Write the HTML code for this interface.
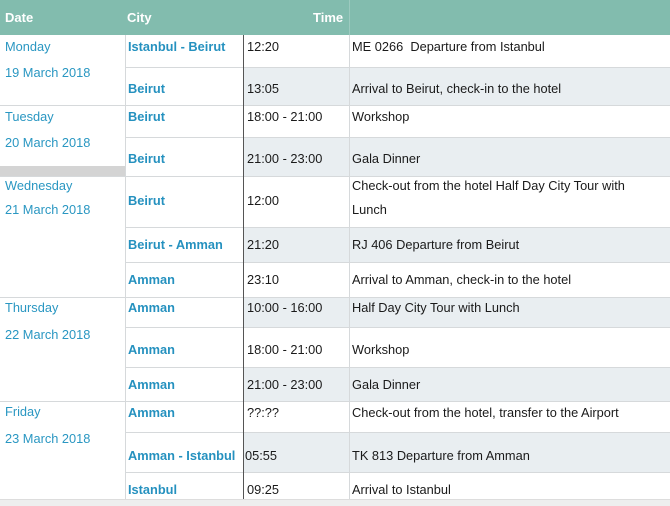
<!DOCTYPE html>
<html><head><meta charset="utf-8"><style>
*{margin:0;padding:0;box-sizing:border-box}
body{width:670px;height:506px;overflow:hidden;background:#fff;font-family:"Liberation Sans",Arial,sans-serif;font-size:12.8px;color:#1a1a1a;position:relative}
.h{position:absolute;left:0;top:0;width:670px;height:35px;background:#82bcae}
.ht{position:absolute;top:10px;color:#fff;font-weight:bold;font-size:13px}
.sh{position:absolute;left:243px;width:427px;background:#e9eef1}
.hl{position:absolute;height:1px;background:#d6d9db}
.vl{position:absolute;width:1px;background:#d6d9db}
.t{position:absolute;white-space:nowrap;line-height:16px;margin-top:1px}
.d{color:#2a97c2}
.c{color:#2591bf;font-weight:bold}
</style></head><body>
<div class="h"></div>
<div class="ht" style="left:5px">Date</div>
<div class="ht" style="left:127px">City</div>
<div class="ht" style="left:313px">Time</div>
<div class="vl" style="left:349px;top:0;height:35px;background:#9ccabf"></div>

<div class="sh" style="top:67px;height:38px"></div>
<div class="sh" style="top:137px;height:39px"></div>
<div class="sh" style="top:227px;height:35px"></div>
<div class="sh" style="top:297px;height:30px"></div>
<div class="sh" style="top:367px;height:35px"></div>
<div class="sh" style="top:432px;height:40px"></div>
<div style="position:absolute;left:0;top:166px;width:125px;height:10px;background:#d4d4d4"></div>

<div class="hl" style="left:125px;width:545px;top:67px"></div>
<div class="hl" style="left:0;width:670px;top:105px"></div>
<div class="hl" style="left:125px;width:545px;top:137px"></div>
<div class="hl" style="left:0;width:670px;top:176px"></div>
<div class="hl" style="left:125px;width:545px;top:227px"></div>
<div class="hl" style="left:125px;width:545px;top:262px"></div>
<div class="hl" style="left:0;width:670px;top:297px"></div>
<div class="hl" style="left:125px;width:545px;top:327px"></div>
<div class="hl" style="left:125px;width:545px;top:367px"></div>
<div class="hl" style="left:0;width:670px;top:401px"></div>
<div class="hl" style="left:125px;width:545px;top:432px"></div>
<div class="hl" style="left:125px;width:545px;top:472px"></div>
<div class="vl" style="left:125px;top:35px;height:465px"></div>
<div class="vl" style="left:349px;top:35px;height:465px"></div>
<div class="vl" style="left:243px;top:35px;height:465px;background:#555"></div>
<div style="position:absolute;left:0;top:499px;width:670px;height:7px;background:#eeeeee;border-top:1px solid #ddd"></div>

<div class="t d" style="left:5px;top:38px">Monday</div>
<div class="t d" style="left:5px;top:64px">19 March 2018</div>
<div class="t d" style="left:5px;top:108px">Tuesday</div>
<div class="t d" style="left:5px;top:134px">20 March 2018</div>
<div class="t d" style="left:5px;top:177px">Wednesday</div>
<div class="t d" style="left:5px;top:201px">21 March 2018</div>
<div class="t d" style="left:5px;top:299px">Thursday</div>
<div class="t d" style="left:5px;top:326px">22 March 2018</div>
<div class="t d" style="left:5px;top:403px">Friday</div>
<div class="t d" style="left:5px;top:430px">23 March 2018</div>

<div class="t c" style="left:128px;top:38px">Istanbul - Beirut</div>
<div class="t" style="left:247px;top:38px">12:20</div>
<div class="t" style="left:352px;top:38px">ME 0266&nbsp; Departure from Istanbul</div>

<div class="t c" style="left:128px;top:80px">Beirut</div>
<div class="t" style="left:247px;top:80px">13:05</div>
<div class="t" style="left:352px;top:80px">Arrival to Beirut, check-in to the hotel</div>

<div class="t c" style="left:128px;top:108px">Beirut</div>
<div class="t" style="left:247px;top:108px">18:00 - 21:00</div>
<div class="t" style="left:352px;top:108px">Workshop</div>

<div class="t c" style="left:128px;top:150px">Beirut</div>
<div class="t" style="left:247px;top:150px">21:00 - 23:00</div>
<div class="t" style="left:352px;top:150px">Gala Dinner</div>

<div class="t c" style="left:128px;top:192px">Beirut</div>
<div class="t" style="left:247px;top:192px">12:00</div>
<div class="t" style="left:352px;top:177px">Check-out from the hotel Half Day City Tour with</div>
<div class="t" style="left:352px;top:201px">Lunch</div>

<div class="t c" style="left:128px;top:236px">Beirut - Amman</div>
<div class="t" style="left:247px;top:236px">21:20</div>
<div class="t" style="left:352px;top:236px">RJ 406 Departure from Beirut</div>

<div class="t c" style="left:128px;top:271px">Amman</div>
<div class="t" style="left:247px;top:271px">23:10</div>
<div class="t" style="left:352px;top:271px">Arrival to Amman, check-in to the hotel</div>

<div class="t c" style="left:128px;top:299px">Amman</div>
<div class="t" style="left:247px;top:299px">10:00 - 16:00</div>
<div class="t" style="left:352px;top:299px">Half Day City Tour with Lunch</div>

<div class="t c" style="left:128px;top:341px">Amman</div>
<div class="t" style="left:247px;top:341px">18:00 - 21:00</div>
<div class="t" style="left:352px;top:341px">Workshop</div>

<div class="t c" style="left:128px;top:376px">Amman</div>
<div class="t" style="left:247px;top:376px">21:00 - 23:00</div>
<div class="t" style="left:352px;top:376px">Gala Dinner</div>

<div class="t c" style="left:128px;top:404px">Amman</div>
<div class="t" style="left:247px;top:404px">??:??</div>
<div class="t" style="left:352px;top:404px">Check-out from the hotel, transfer to the Airport</div>

<div class="t c" style="left:128px;top:447px">Amman - Istanbul</div>
<div class="t" style="left:245px;top:447px">05:55</div>
<div class="t" style="left:352px;top:447px">TK 813 Departure from Amman</div>

<div class="t c" style="left:128px;top:481px">Istanbul</div>
<div class="t" style="left:247px;top:481px">09:25</div>
<div class="t" style="left:352px;top:481px">Arrival to Istanbul</div>
</body></html>
